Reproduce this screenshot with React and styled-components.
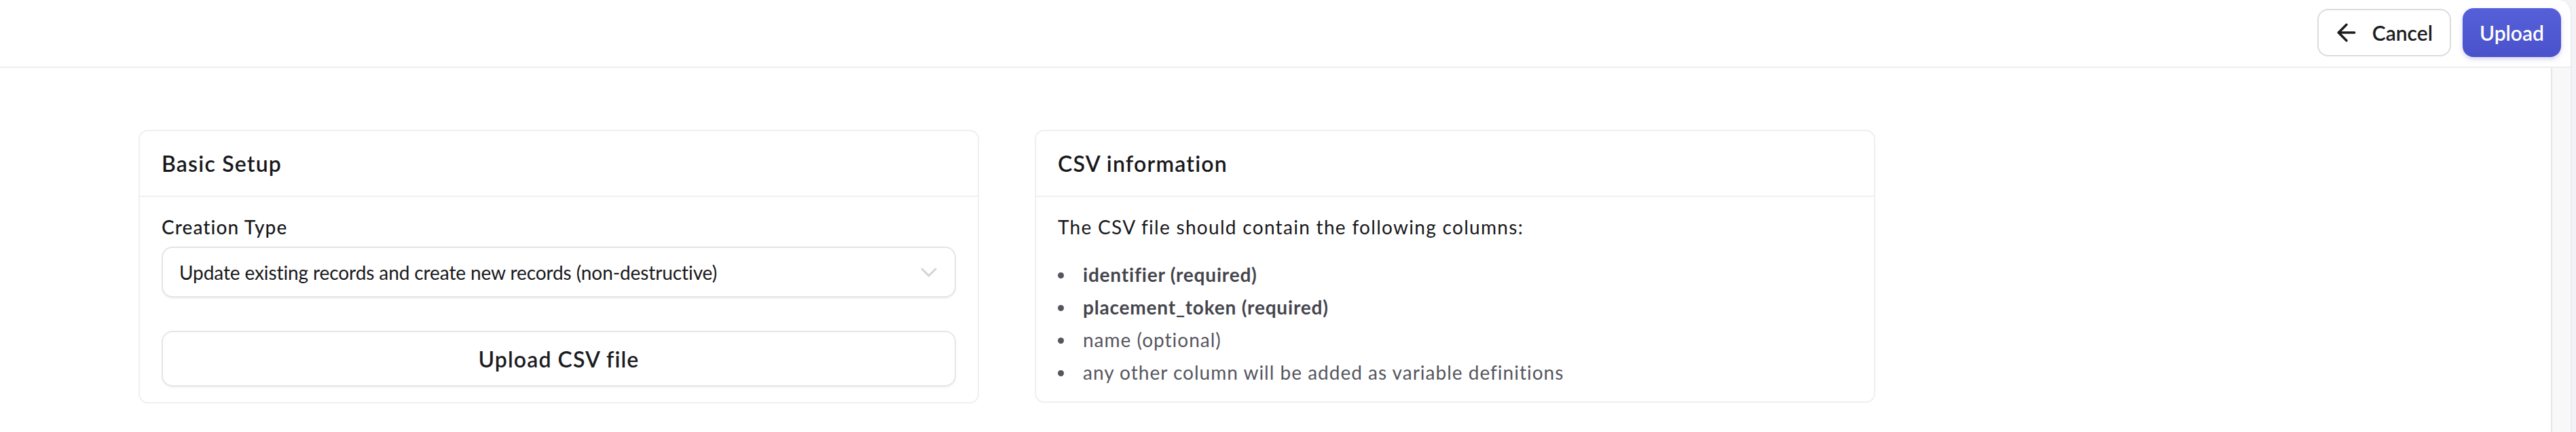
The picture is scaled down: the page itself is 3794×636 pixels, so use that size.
import styled, { createGlobalStyle } from "styled-components";
import { ArrowLeft, ChevronDown } from "lucide-react";

const GlobalStyle = createGlobalStyle`
  html, body {
    margin: 0;
    padding: 0;
    background: #f3f3f5;
  }
  body {
    font-family: "Lato", "Liberation Sans", sans-serif;
    color: #18181b;
  }
  * {
    box-sizing: border-box;
  }
`;

const columns = [
  { name: "identifier (required)", strong: true },
  { name: "placement_token (required)", strong: true },
  { name: "name (optional)", strong: false },
  { name: "any other column will be added as variable definitions", strong: false },
];

export default function App() {
  return (
    <>
      <GlobalStyle />
      <Shell>
        <TopBar>
          <GhostButton>
            <ArrowLeft size={40} strokeWidth={2.1} />
            Cancel
          </GhostButton>
          <PrimaryButton>Upload</PrimaryButton>
        </TopBar>
        <Main>
          <Content>
            <Card>
              <CardHeader>Basic Setup</CardHeader>
              <CardBody>
                <Label>Creation Type</Label>
                <Select>
                  <span>Update existing records and create new records (non-destructive)</span>
                  <ChevronDown size={40} strokeWidth={1.8} color="#d4d4d8" />
                </Select>
                <FileButton>Upload CSV file</FileButton>
              </CardBody>
            </Card>
            <Card>
              <CardHeader>CSV information</CardHeader>
              <CardBody>
                <Paragraph>The CSV file should contain the following columns:</Paragraph>
                <List>
                  {columns.map((c) => (
                    <Item key={c.name} $strong={c.strong}>
                      <Dot />
                      {c.name}
                    </Item>
                  ))}
                </List>
              </CardBody>
            </Card>
          </Content>
          <ScrollTrack />
        </Main>
      </Shell>
    </>
  );
}

const Shell = styled.div`
  width: calc(100% - 6px);
  height: 636px;
  background: #ffffff;
  border-right: 2px solid #ececef;
  border-top-right-radius: 20px;
  display: flex;
  flex-direction: column;
  overflow: hidden;
`;

const TopBar = styled.header`
  height: 100px;
  flex: 0 0 100px;
  border-bottom: 2px solid #ededf0;
  display: flex;
  justify-content: flex-end;
  align-items: center;
  gap: 17px;
  padding-right: 14px;
`;

const BaseButton = styled.button`
  font-family: "Lato", "Liberation Sans", sans-serif;
  font-size: 30px;
  font-weight: 600;
  display: flex;
  align-items: center;
  border-radius: 16px;
  cursor: pointer;
  margin-top: -2px;
`;

const GhostButton = styled(BaseButton)`
  height: 70px;
  padding: 0 25px 0 21px;
  gap: 18px;
  background: #ffffff;
  color: #1c1c1f;
  border: 2px solid #dcdce0;
`;

const PrimaryButton = styled(BaseButton)`
  height: 72px;
  padding: 0 25px;
  background: linear-gradient(180deg, #5560d8 0%, #4a52cb 100%);
  color: #ffffff;
  border: none;
  box-shadow: 0 3px 6px rgba(74, 82, 203, 0.25);
`;

const Main = styled.div`
  flex: 1;
  display: flex;
  min-height: 0;
`;

const Content = styled.main`
  flex: 1;
  display: flex;
  align-items: flex-start;
  gap: 82px;
  padding: 91px 0 0 204px;
`;

const ScrollTrack = styled.div`
  width: 29px;
  flex: 0 0 29px;
  background: #f8f8f9;
  border-left: 2px solid #e6e6e9;
`;

const Card = styled.section`
  width: 1238px;
  flex: 0 0 1238px;
  border: 2px solid #efeff2;
  border-radius: 14px;
  background: #ffffff;
`;

const CardHeader = styled.h2`
  margin: 0;
  height: 97px;
  display: flex;
  align-items: center;
  padding: 0 32px;
  border-bottom: 2px solid #efeff2;
  font-size: 32px;
  font-weight: 600;
  letter-spacing: 1.2px;
  color: #18181b;
`;

const CardBody = styled.div`
  padding: 24px 32px 23px;
  display: flex;
  flex-direction: column;
`;

const Label = styled.label`
  font-size: 28px;
  line-height: 40px;
  font-weight: 500;
  letter-spacing: 1.1px;
  color: #18181b;
  margin-bottom: 9px;
`;

const Select = styled.div`
  height: 75px;
  border: 2px solid #e4e4e7;
  border-radius: 16px;
  box-shadow: 0 2px 2px rgba(24, 24, 27, 0.05);
  display: flex;
  align-items: center;
  justify-content: space-between;
  padding: 0 18px 0 24px;
  font-size: 28px;
  letter-spacing: -0.1px;
  color: #18181b;
`;

const FileButton = styled.button`
  margin-top: 49px;
  height: 82px;
  border: 2px solid #e6e6ea;
  border-radius: 16px;
  background: #ffffff;
  box-shadow: 0 2px 2px rgba(24, 24, 27, 0.05);
  font-family: "Lato", "Liberation Sans", sans-serif;
  font-size: 32px;
  font-weight: 600;
  letter-spacing: 1.1px;
  color: #1c1c1f;
  cursor: pointer;
`;

const Paragraph = styled.p`
  margin: 0 0 30px;
  font-size: 28px;
  line-height: 40px;
  letter-spacing: 1.3px;
  color: #18181b;
`;

const List = styled.ul`
  margin: 0;
  padding: 0;
  list-style: none;
  display: flex;
  flex-direction: column;
  gap: 8px;
`;

const Item = styled.li`
  display: flex;
  align-items: center;
  gap: 28px;
  font-size: 28px;
  line-height: 40px;
  font-weight: ${(p) => (p.$strong ? 700 : 400)};
  letter-spacing: ${(p) => (p.$strong ? "0.8px" : "1px")};
  color: ${(p) => (p.$strong ? "#45454d" : "#55555e")};
`;

const Dot = styled.span`
  width: 9px;
  height: 9px;
  border-radius: 50%;
  background: #55555e;
  flex: 0 0 9px;
  margin-top: 2px;
`;
